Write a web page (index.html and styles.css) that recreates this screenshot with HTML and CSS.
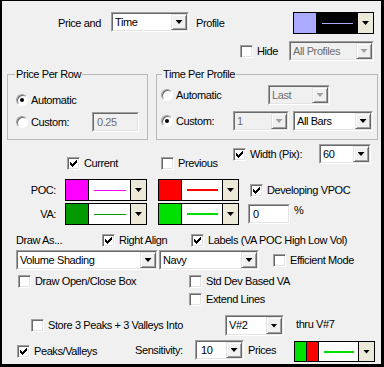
FILE: index.html
```html
<!DOCTYPE html>
<html lang="en">
<head>
    <meta charset="UTF-8">
    <title>Volume Profile Settings</title>
    <link rel="stylesheet" href="styles.css">
</head>
<body>
    <div class="dlg">
        <!-- top: profile type and colour -->
        <div class="row r1">
            <span class="lbl w-price">Price and</span>
            <span class="combo c-time"><span class="combo-in"><span class="val">Time</span><span class="btn"><i class="arr"></i></span></span></span>
            <span class="lbl w-profile">Profile</span>
            <span class="swatch s-profile">
                <span class="chip lavender"></span>
                <span class="well dark"><span class="line l-lav"></span></span>
                <span class="sbtn"><i class="arr"></i></span>
            </span>
        </div>

        <div class="row r2">
            <span class="cb w-hide"><span class="box"></span><span class="lbl">Hide</span></span>
            <span class="combo off c-all"><span class="combo-in"><span class="val">All Profiles</span><span class="btn"><i class="arr"></i></span></span></span>
        </div>

        <!-- group boxes -->
        <div class="row groups">
            <div class="group g1">
                <div class="group-title">Price Per Row</div>
                <div class="row g1a">
                    <span class="cb"><span class="radio on"></span><span class="lbl">Automatic</span></span>
                </div>
                <div class="row g1b">
                    <span class="cb w-custom1"><span class="radio"></span><span class="lbl">Custom:</span></span>
                    <span class="edit off e-row"><span>0.25</span></span>
                </div>
            </div>
            <div class="group g2">
                <div class="group-title">Time Per Profile</div>
                <div class="row g2a">
                    <span class="cb w-auto2"><span class="radio"></span><span class="lbl">Automatic</span></span>
                    <span class="combo off c-last"><span class="combo-in"><span class="val">Last</span><span class="btn"><i class="arr"></i></span></span></span>
                </div>
                <div class="row g2b">
                    <span class="cb w-custom2"><span class="radio on"></span><span class="lbl">Custom:</span></span>
                    <span class="combo off c-one"><span class="combo-in"><span class="val">1</span><span class="btn"><i class="arr"></i></span></span></span>
                    <span class="combo c-bars"><span class="combo-in"><span class="val">All Bars</span><span class="btn"><i class="arr"></i></span></span></span>
                </div>
            </div>
        </div>

        <!-- current / previous, POC and VA colours -->
        <div class="row ra">
            <span class="cb w-current low"><span class="box"><svg width="7" height="7" viewBox="0 0 7 7"><path d="M6 0h1v1h-1zM5 1h2v1h-2zM0 2h1v1h-1zM4 2h3v1h-3zM0 3h2v1h-2zM3 3h3v1h-3zM0 4h5v1h-5zM1 5h3v1h-3zM2 6h1v1h-1z"/></svg></span><span class="lbl">Current</span></span>
            <span class="cb w-prev low"><span class="box"></span><span class="lbl">Previous</span></span>
            <span class="cb w-width high"><span class="box"><svg width="7" height="7" viewBox="0 0 7 7"><path d="M6 0h1v1h-1zM5 1h2v1h-2zM0 2h1v1h-1zM4 2h3v1h-3zM0 3h2v1h-2zM3 3h3v1h-3zM0 4h5v1h-5zM1 5h3v1h-3zM2 6h1v1h-1z"/></svg></span><span class="lbl">Width (Pix):</span></span>
            <span class="combo c-60"><span class="combo-in"><span class="val">60</span><span class="btn"><i class="arr"></i></span></span></span>
        </div>

        <div class="row rb">
            <span class="lbl tag">POC:</span>
            <span class="swatch s-left">
                <span class="chip magenta"></span>
                <span class="well"><span class="line l-magenta"></span></span>
                <span class="sbtn"><i class="arr"></i></span>
            </span>
            <span class="swatch s-right">
                <span class="chip red"></span>
                <span class="well"><span class="line l-red"></span></span>
                <span class="sbtn"><i class="arr"></i></span>
            </span>
            <span class="cb w-vpoc"><span class="box"><svg width="7" height="7" viewBox="0 0 7 7"><path d="M6 0h1v1h-1zM5 1h2v1h-2zM0 2h1v1h-1zM4 2h3v1h-3zM0 3h2v1h-2zM3 3h3v1h-3zM0 4h5v1h-5zM1 5h3v1h-3zM2 6h1v1h-1z"/></svg></span><span class="lbl">Developing VPOC</span></span>
        </div>

        <div class="row rc">
            <span class="lbl tag">VA:</span>
            <span class="swatch s-left">
                <span class="chip darkgreen"></span>
                <span class="well"><span class="line l-darkgreen"></span></span>
                <span class="sbtn"><i class="arr"></i></span>
            </span>
            <span class="swatch s-right">
                <span class="chip green"></span>
                <span class="well"><span class="line l-green"></span></span>
                <span class="sbtn"><i class="arr"></i></span>
            </span>
            <span class="edit e-pct"><span>0</span></span>
            <span class="lbl pct">%</span>
        </div>

        <!-- drawing options -->
        <div class="row rd">
            <span class="lbl w-draw">Draw As...</span>
            <span class="cb w-align"><span class="box"><svg width="7" height="7" viewBox="0 0 7 7"><path d="M6 0h1v1h-1zM5 1h2v1h-2zM0 2h1v1h-1zM4 2h3v1h-3zM0 3h2v1h-2zM3 3h3v1h-3zM0 4h5v1h-5zM1 5h3v1h-3zM2 6h1v1h-1z"/></svg></span><span class="lbl">Right Align</span></span>
            <span class="cb"><span class="box"><svg width="7" height="7" viewBox="0 0 7 7"><path d="M6 0h1v1h-1zM5 1h2v1h-2zM0 2h1v1h-1zM4 2h3v1h-3zM0 3h2v1h-2zM3 3h3v1h-3zM0 4h5v1h-5zM1 5h3v1h-3zM2 6h1v1h-1z"/></svg></span><span class="lbl">Labels (VA POC High Low Vol)</span></span>
        </div>

        <div class="row re">
            <span class="combo c-shading"><span class="combo-in"><span class="val">Volume Shading</span><span class="btn"><i class="arr"></i></span></span></span>
            <span class="combo c-navy"><span class="combo-in"><span class="val">Navy</span><span class="btn"><i class="arr"></i></span></span></span>
            <span class="cb w-eff"><span class="box"></span><span class="lbl">Efficient Mode</span></span>
        </div>

        <div class="row rf">
            <span class="cb w-openclose"><span class="box"></span><span class="lbl">Draw Open/Close Box</span></span>
            <span class="cb"><span class="box"></span><span class="lbl">Std Dev Based VA</span></span>
        </div>

        <div class="row rg">
            <span class="cb"><span class="box"></span><span class="lbl">Extend Lines</span></span>
        </div>

        <!-- peaks and valleys -->
        <div class="row rh">
            <span class="cb w-store"><span class="box"></span><span class="lbl">Store 3 Peaks + 3 Valleys Into</span></span>
            <span class="combo c-v2"><span class="combo-in"><span class="val">V#2</span><span class="btn"><i class="arr"></i></span></span></span>
            <span class="lbl thru">thru V#7</span>
        </div>

        <div class="row ri">
            <span class="cb w-peaks"><span class="box"><svg width="7" height="7" viewBox="0 0 7 7"><path d="M6 0h1v1h-1zM5 1h2v1h-2zM0 2h1v1h-1zM4 2h3v1h-3zM0 3h2v1h-2zM3 3h3v1h-3zM0 4h5v1h-5zM1 5h3v1h-3zM2 6h1v1h-1z"/></svg></span><span class="lbl">Peaks/Valleys</span></span>
            <span class="lbl w-sens">Sensitivity:</span>
            <span class="combo c-10"><span class="combo-in"><span class="val">10</span><span class="btn"><i class="arr"></i></span></span></span>
            <span class="lbl w-prices">Prices</span>
            <span class="swatch s-peaks">
                <span class="chip green narrow"></span>
                <span class="chip red narrow"></span>
                <span class="well"><span class="line l-green"></span></span>
                <span class="sbtn"><i class="arr"></i></span>
            </span>
        </div>
    </div>
</body>
</html>
```

FILE: styles.css
```css
* {
    box-sizing: border-box;
}

body {
    margin: 0;
    background-color: #f0f0f0;
    font-family: "Liberation Sans", Arial, sans-serif;
    font-size: 11px;
    letter-spacing: -0.4px;
    color: #000;
}

.dlg {
    width: 384px;
    height: 367px;
    overflow: hidden;
    background-color: #f0f0f0;
    border-style: solid;
    border-color: #000;
    border-width: 1px 3px 3px 2px;
}

.row {
    display: flex;
    align-items: center;
}

.lbl {
    line-height: 13px;
    white-space: nowrap;
    flex: none;
}

/* combo boxes */
.combo {
    display: flex;
    flex: none;
    height: 20px;
    border: 1px solid;
    border-color: #a0a0a0 #fff #fff #a0a0a0;
}
.combo-in {
    flex: 1;
    display: flex;
    min-width: 0;
    background-color: #fff;
    border: 1px solid;
    border-color: #696969 #e3e3e3 #e3e3e3 #696969;
}
.combo .val {
    flex: 1;
    padding-left: 2px;
    line-height: 16px;
    white-space: nowrap;
    overflow: hidden;
}
.btn {
    width: 16px;
    flex: none;
    display: flex;
    align-items: center;
    justify-content: center;
    background-color: #f0f0f0;
    border: 1px solid;
    border-color: #e3e3e3 #696969 #696969 #e3e3e3;
    box-shadow: inset 1px 1px #fff, inset -1px -1px #a0a0a0;
}
.arr {
    width: 7px;
    height: 4px;
    background-color: #000;
    clip-path: polygon(0 0, 100% 0, 50% 100%);
}
.combo.off .combo-in {
    background-color: #f0f0f0;
}
.combo.off .val {
    color: #6d6d6d;
}
.combo.off .arr {
    background-color: #a0a0a0;
}

/* edit boxes */
.edit {
    height: 20px;
    flex: none;
    border: 1px solid;
    border-color: #a0a0a0 #fff #fff #a0a0a0;
}
.edit span {
    display: block;
    height: 100%;
    padding-left: 3px;
    line-height: 16px;
    background-color: #fff;
    border: 1px solid;
    border-color: #696969 #e3e3e3 #e3e3e3 #696969;
}
.edit.off span {
    background-color: #f0f0f0;
    color: #6d6d6d;
}

/* checkboxes and radios */
.cb {
    display: flex;
    align-items: center;
    flex: none;
}
.cb .lbl {
    margin-left: 4px;
}
.box {
    width: 13px;
    height: 13px;
    flex: none;
    display: flex;
    align-items: center;
    justify-content: center;
    background-color: #fff;
    border: 1px solid;
    border-color: #a0a0a0 #fff #fff #a0a0a0;
    box-shadow: inset 1px 1px #696969, inset -1px -1px #e3e3e3;
}
.box svg {
    shape-rendering: crispEdges;
}
.radio {
    width: 12px;
    height: 12px;
    flex: none;
    display: flex;
    align-items: center;
    justify-content: center;
    border-radius: 50%;
    background-color: #fff;
    border: 1px solid;
    border-color: #a0a0a0 #fff #fff #a0a0a0;
    box-shadow: inset 1px 1px #696969;
}
.radio + .lbl {
    margin-left: 3px;
}
.radio.on::after {
    content: "";
    width: 4px;
    height: 4px;
    border-radius: 50%;
    background-color: #000;
}

/* colour pickers */
.swatch {
    display: flex;
    flex: none;
    height: 22px;
    border: 1px solid #000;
}
.chip {
    width: 23px;
    flex: none;
    border-right: 1px solid #000;
}
.chip.narrow {
    width: 12px;
}
.well {
    flex: 1;
    display: flex;
    align-items: center;
    background-color: #fff;
}
.well.dark {
    background-color: #000;
}
.line {
    flex: 1;
    height: 1px;
    margin: 0 4px 0 5px;
}
.sbtn {
    width: 16px;
    flex: none;
    display: flex;
    align-items: center;
    justify-content: center;
    background-color: #ece9d8;
    border-left: 1px solid #000;
}

.lavender { background-color: #aaaaff; }
.magenta { background-color: #ff00ff; }
.red { background-color: #ff0000; }
.darkgreen { background-color: #009900; }
.green { background-color: #00e000; }

.l-lav { background-color: #aaaaff; }
.l-magenta { background-color: #ff00ff; }
.l-red { background-color: #ff0000; height: 2px; }
.l-darkgreen { background-color: #009900; }
.l-green { background-color: #00e000; height: 2px; }

/* row 1 */
.r1 {
    margin-top: 11px;
    height: 22px;
    padding-left: 56px;
}
.w-price { width: 53px; }
.c-time { width: 78px; align-self: flex-start; }
.w-profile { width: 97px; margin-left: 7px; }
.s-profile { width: 81px; }

/* row 2 */
.r2 {
    margin-top: 7px;
    height: 20px;
    padding-left: 238px;
}
.w-hide { width: 49px; }
.c-all { width: 85px; }

/* group boxes */
.groups {
    margin-top: 13px;
    padding-left: 5px;
    gap: 8px;
    align-items: flex-start;
}
.group {
    height: 66px;
    border: 1px solid #b9b9b9;
}
.g1 { width: 141px; }
.g2 { width: 222px; }
.group-title {
    width: fit-content;
    margin-top: -7px;
    padding: 0 1px;
    line-height: 13px;
    background-color: #f0f0f0;
}
.g1 .group-title { margin-left: 7px; }
.g2 .group-title { margin-left: 5px; }

.g1a { margin-top: 9px; height: 20px; padding-left: 8px; }
.g1b { margin-top: 2px; height: 20px; padding-left: 8px; }
.w-custom1 { width: 76px; }
.e-row { width: 47px; }

.g2a { margin-top: 4px; height: 20px; padding-left: 4px; }
.g2b { margin-top: 6px; height: 20px; padding-left: 4px; }
.w-auto2 { width: 107px; }
.c-last { width: 62px; }
.w-custom2 { width: 72px; }
.c-one { width: 56px; }
.c-bars { width: 80px; margin-left: 4px; }

/* current / previous */
.ra {
    margin-top: 4px;
    height: 26px;
    padding-left: 65px;
}
.cb.low { align-self: flex-end; }
.cb.high { align-self: flex-start; margin-top: 4px; }
.w-current { width: 94px; }
.w-prev { width: 72px; }
.w-width { width: 86px; }
.c-60 { width: 52px; align-self: flex-start; }

.rb {
    margin-top: 9px;
    height: 22px;
}
.rc {
    margin-top: 2px;
    height: 22px;
}
.tag {
    width: 63px;
    padding-right: 9px;
    text-align: right;
}
.s-left { width: 82px; }
.s-right { width: 81px; margin-left: 11px; }
.w-vpoc { margin-left: 11px; }
.e-pct { width: 42px; margin-left: 9px; }
.pct {
    margin-left: 4px;
    align-self: flex-start;
    margin-top: 1px;
}

/* drawing options */
.rd {
    margin-top: 8px;
    height: 14px;
    padding-left: 14px;
}
.w-draw { width: 86px; }
.w-align { width: 89px; }

.re {
    margin-top: 3px;
    height: 20px;
    padding-left: 14px;
}
.c-shading { width: 142px; }
.c-navy { width: 100px; margin-left: 1px; }
.w-eff { margin-left: 14px; }

.rf {
    margin-top: 5px;
    height: 13px;
    padding-left: 16px;
}
.w-openclose { width: 171px; }

.rg {
    margin-top: 5px;
    height: 13px;
    padding-left: 187px;
}

/* peaks and valleys */
.rh {
    margin-top: 9px;
    height: 21px;
    padding-left: 29px;
}
.w-store { width: 194px; }
.c-v2 { width: 59px; height: 21px; }
.thru { margin-left: 12px; margin-bottom: 3px; }

.ri {
    margin-top: 4px;
    height: 22px;
    padding-left: 15px;
}
.w-peaks { width: 118px; }
.w-sens { width: 60px; margin-bottom: 2px; }
.c-10 { width: 49px; align-self: flex-start; }
.c-10 .val { padding-left: 4px; }
.w-prices { width: 46px; margin-left: 4px; margin-bottom: 2px; }
.s-peaks { width: 81px; height: 21px; align-self: flex-end; }
.s-peaks .chip { width: 12px; }
```
